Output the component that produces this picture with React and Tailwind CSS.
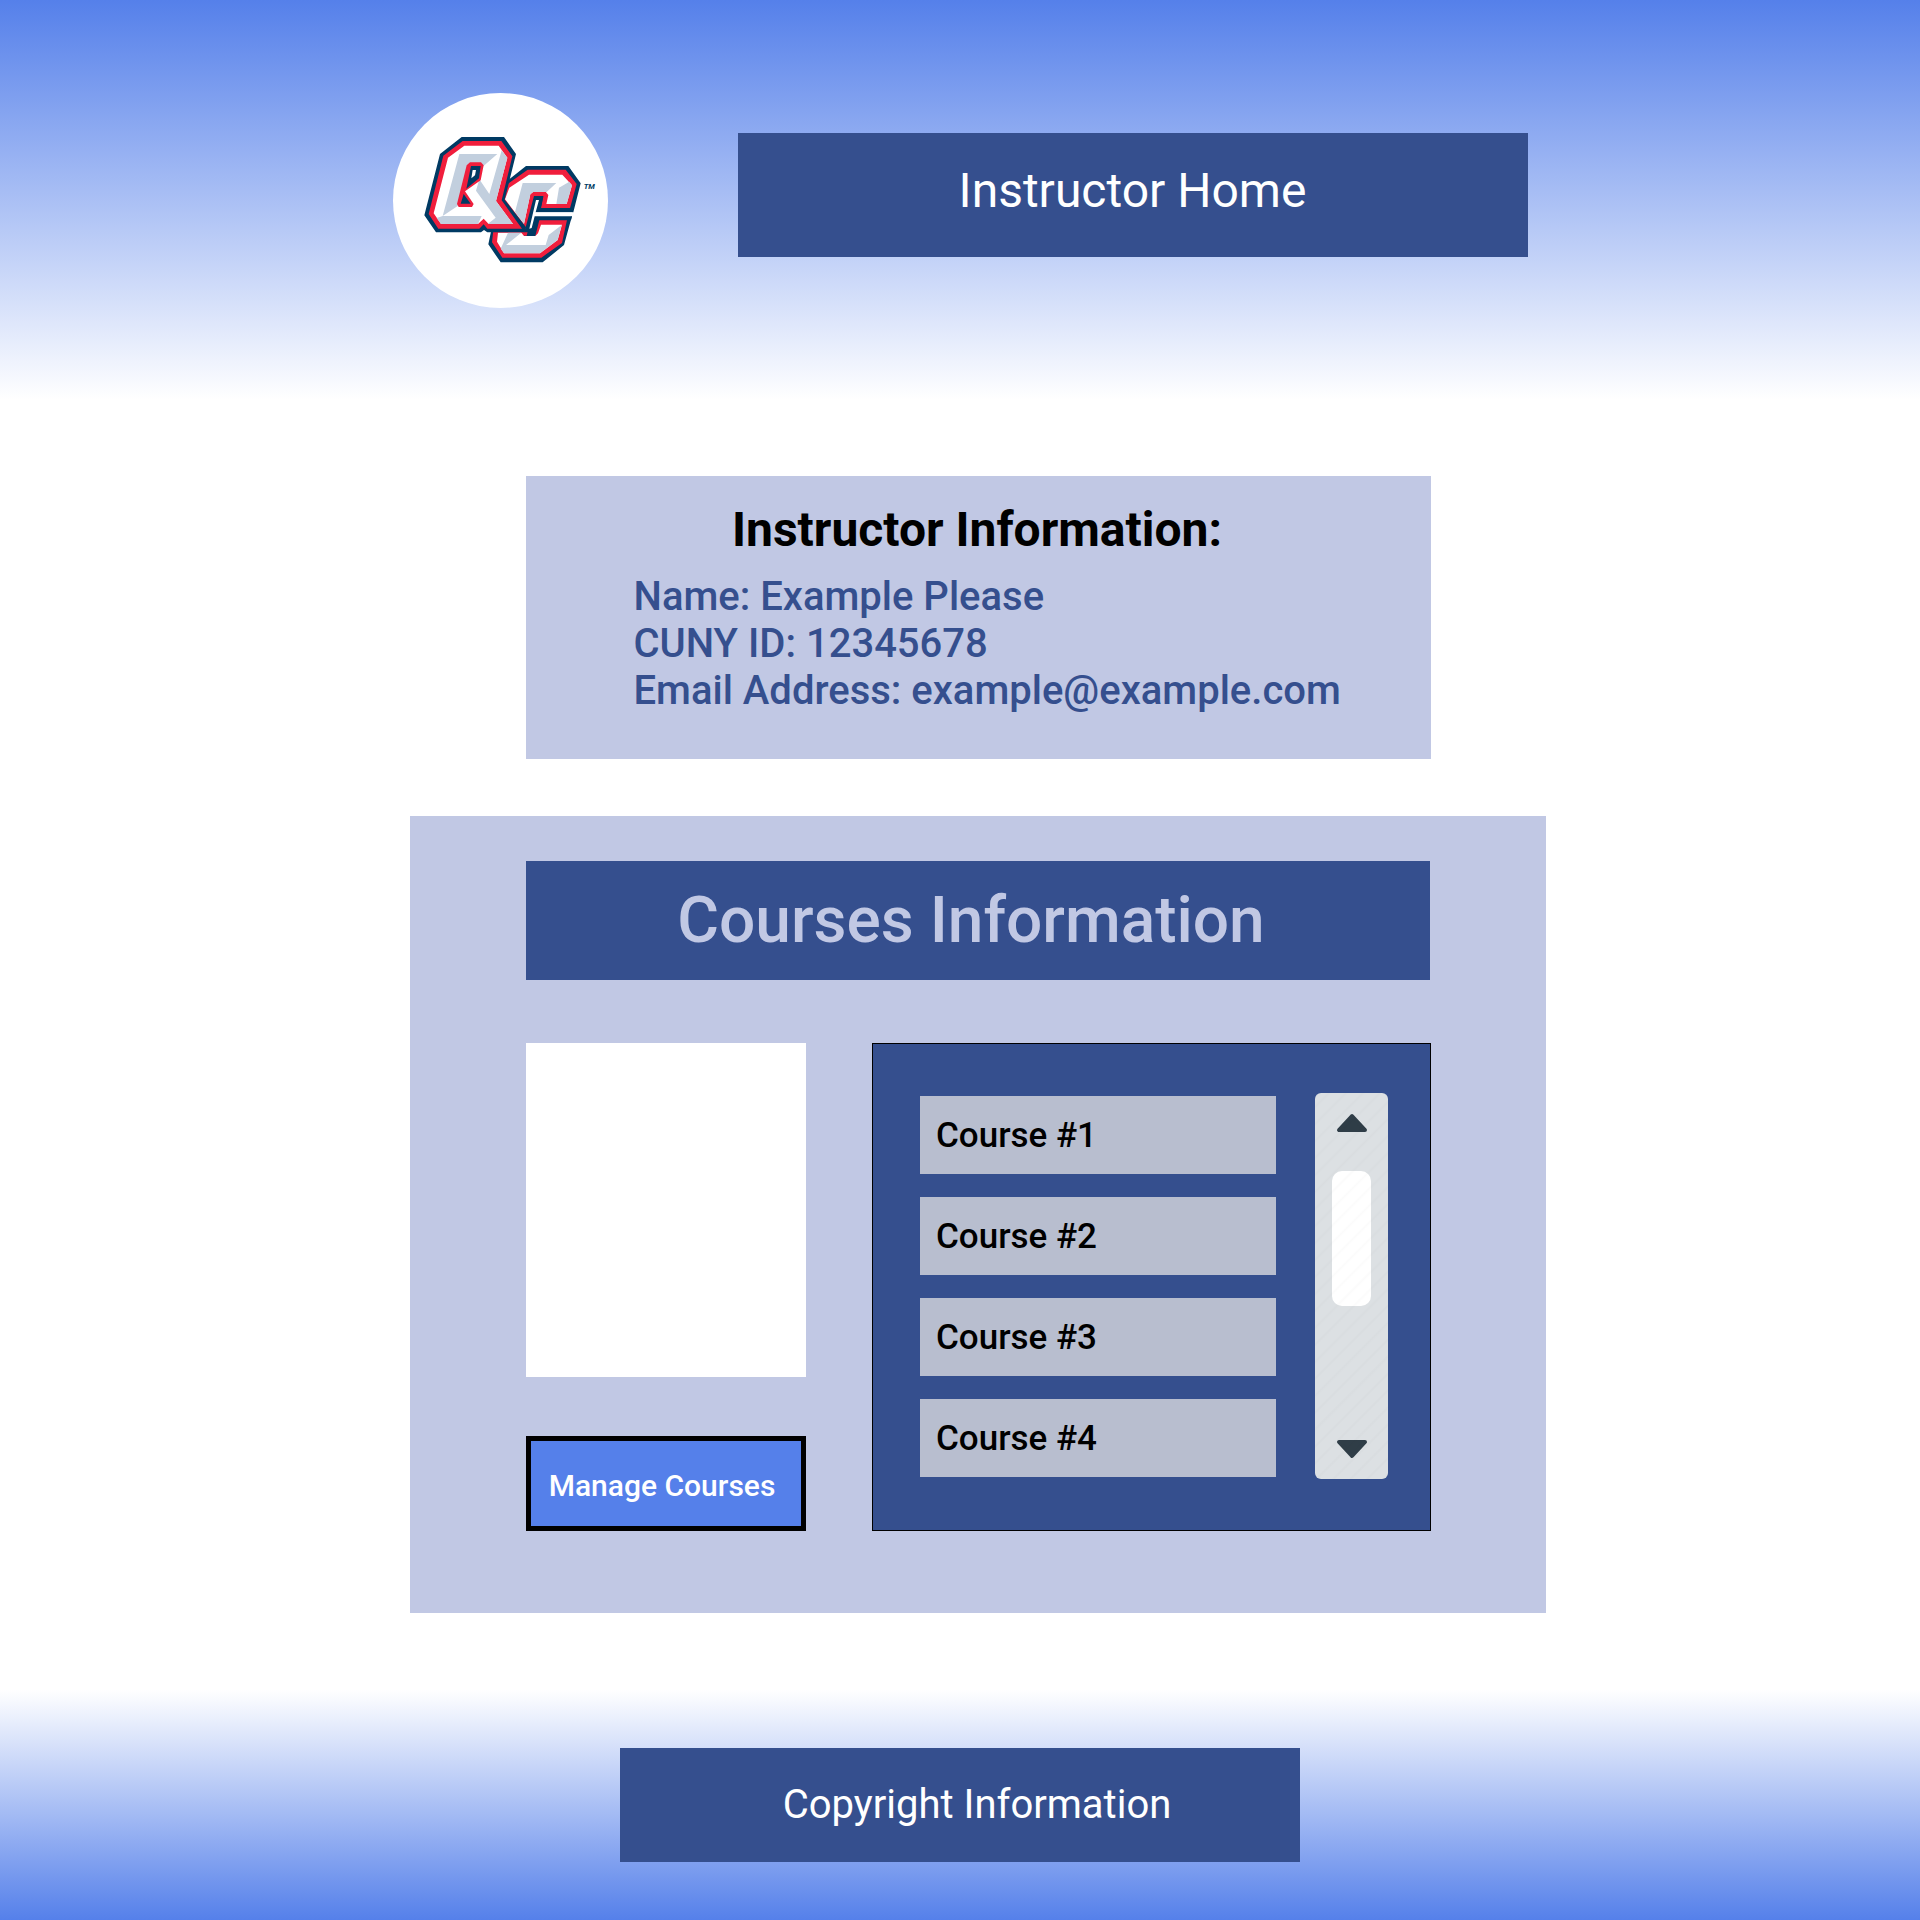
import React from "react";

const courses = ["Course #1", "Course #2", "Course #3", "Course #4"];

function Logo() {
  return (
    <svg viewBox="39 39 645 645" className="block size-full" role="img" aria-label="QC logo">
      {/* C: navy body, red trim, white and grey facets */}
      <path fill="#003a63" d="M380 304 438 258H565L602 310 580 397H464L460 408H576L552 495 488 547H362L325 493 336 440 360 360Z" />
      <path fill="#f01e3c" d="M380 314 443 269H557L590 312 570 385H483L490 350H470L440 467H423L400 440 372 360ZM340 452H355L420 452 432 468H466L478 420H561L546 489 484 533H367L336 487Z" />
      <path fill="#fff" d="M388 323 447 284H547L576 316 560 372H499L505 345 497 335H460L451 343 432 432 375 358ZM354 458H424L432 468H466L474 460 483 434H546L533 480 480 520H372L351 485Z" />
      <path fill="#c2cfde" d="M428 309H529L500 336H460L451 343 432 432 405 396ZM568 305 576 316 560 372H529L537 323ZM384 458H424L378 495H497L506 465 545 435 533 480 480 520H372L362 506Z" />
      <path fill="#003a63" d="M462 348H490L482 384H580L577 397H467L464 408H576L573 421H473L464 457H433Z" />
      <path fill="#fff" d="M468 360H477L467 397H578L575 409H464L455 444 448 446Z" />
      {/* Q: same layers, drawn over the C */}
      <path fill="#003a63" d="M245 171H372L408 222 390 295 374 359 438 442 434 457H322L312 450 303 457H168L133 406 180 222Z" />
      <path fill="#f01e3c" d="M248 183H364L397 229 365 361 426 446H322L311 433 298 446H175L146 402 190 227Z" />
      <path fill="#fff" d="M253 197H356L382 233 348 363 399 432H326L311 416 294 432H183L161 400 204 233Z" />
      <path fill="#c2cfde" d="M238 222H352L308 260 302 249H268L233 378 188 408ZM365 211 382 233 348 363 399 432H323L347 413 288 332 298 298 328 342ZM188 408H305L294 432H183L170 414Z" />
      <path fill="#f01e3c" d="M270 247H303L311 256 302 301 255 334 281 372 276 381H236L231 372 260 256Z" />
      <path fill="#003a63" d="M273 258H302L297 295 259 326ZM251 342 272 371H242Z" />
      <path fill="#fff" d="M278 270H288L285 286 274 295Z" />
      <text x="611" y="327" fill="#003a63" className="font-['Roboto',sans-serif] text-[23px] font-bold italic">TM</text>
    </svg>
  );
}

function Arrow({ down }) {
  return (
    <svg viewBox="0 0 32 20" className="block h-5 w-8" aria-hidden="true">
      <path
        d={down ? "M3 3H29L16 17Z" : "M3 17H29L16 3Z"}
        fill="#2f3d47"
        stroke="#2f3d47"
        strokeWidth="4"
        strokeLinejoin="round"
      />
    </svg>
  );
}

function Scroller() {
  return (
    <div className="relative flex w-[73px] shrink-0 flex-col items-center justify-between overflow-hidden rounded-md bg-[#dce0e3] py-5">
      <button type="button" aria-label="Scroll up"><Arrow /></button>
      <input
        type="range"
        min="0"
        max="100"
        defaultValue="22"
        aria-label="Scroll position"
        className="h-[306px] w-[39px] appearance-none bg-transparent [writing-mode:vertical-lr] [&::-webkit-slider-thumb]:h-[135px] [&::-webkit-slider-thumb]:w-[39px] [&::-webkit-slider-thumb]:appearance-none [&::-webkit-slider-thumb]:rounded-[10px] [&::-webkit-slider-thumb]:bg-white"
      />
      <button type="button" aria-label="Scroll down"><Arrow down /></button>
      <div className="pointer-events-none absolute inset-0 bg-[repeating-linear-gradient(135deg,transparent_0px,transparent_8px,rgba(0,0,0,0.015)_10px,transparent_12px)]" />
    </div>
  );
}

export default function App() {
  return (
    <div className="min-h-screen bg-white font-['Roboto',sans-serif]">
      <header className="bg-linear-to-b/srgb from-[#5580ea] to-white px-6 pt-[93px] pb-[92px]">
        <div className="mx-auto flex max-w-[1135px] items-start justify-between gap-8">
          <div className="size-[215px] shrink-0 overflow-hidden rounded-full bg-white">
            <Logo />
          </div>
          <h1 className="mt-10 w-full max-w-[790px] bg-[#354f8e] pt-[30px] pb-[38px] text-center text-5xl leading-[56px] text-white">
            Instructor Home
          </h1>
        </div>
      </header>

      <main className="flex flex-col items-center pt-[76px] pb-[77px] pl-9">
        <section className="w-full max-w-[905px] bg-[#c1c8e4] pt-[26px] pb-[45px]">
          <h2 className="pr-[2px] text-center text-5xl leading-[56px] font-bold text-black">Instructor Information:</h2>
          <div className="mt-[15px] pl-[108px] text-[40px] leading-[47px] font-medium text-[#354f8e]">
            <p>Name: Example Please</p>
            <p>CUNY ID: 12345678</p>
            <p>Email Address: example@example.com</p>
          </div>
        </section>

        <section className="mt-[57px] w-full max-w-[1136px] bg-[#c1c8e4] pt-[45px] pr-[115px] pb-[82px] pl-[116px]">
          <h2 className="mr-px bg-[#354f8e] py-[22px] pr-[14px] text-center text-[64px] leading-[75px] font-medium text-[#c1c8e4]">
            Courses Information
          </h2>
          <div className="mt-[63px] flex justify-between gap-8">
            <div className="flex w-[280px] shrink-0 flex-col justify-between">
              <div className="h-[334px] bg-white" />
              <button type="button" className="border-5 border-black bg-[#5580ea] pt-[27px] pr-2 pb-[23px] text-center text-[30px] leading-[35px] font-medium text-white">
                Manage Courses
              </button>
            </div>
            <div className="flex w-full max-w-[559px] justify-between gap-6 border border-black bg-[#354f8e] pt-[49px] pr-[42px] pb-[51px] pl-[47px]">
              <ul className="flex w-full max-w-[356px] flex-col gap-[23px] pt-[3px]">
                {courses.map((c) => (
                  <li key={c} className="bg-[#b8becf] pt-[19px] pb-[17px] pl-4 text-[35px] leading-[42px] font-medium text-black">
                    {c}
                  </li>
                ))}
              </ul>
              <Scroller />
            </div>
          </div>
        </section>
      </main>

      <footer className="bg-linear-to-t/srgb from-[#5580ea] to-white px-6 pt-[58px] pb-[58px]">
        <p className="mx-auto max-w-[680px] bg-[#354f8e] pt-[33px] pb-[34px] pl-[34px] text-center text-[40px] leading-[47px] text-white">
          Copyright Information
        </p>
      </footer>
    </div>
  );
}
